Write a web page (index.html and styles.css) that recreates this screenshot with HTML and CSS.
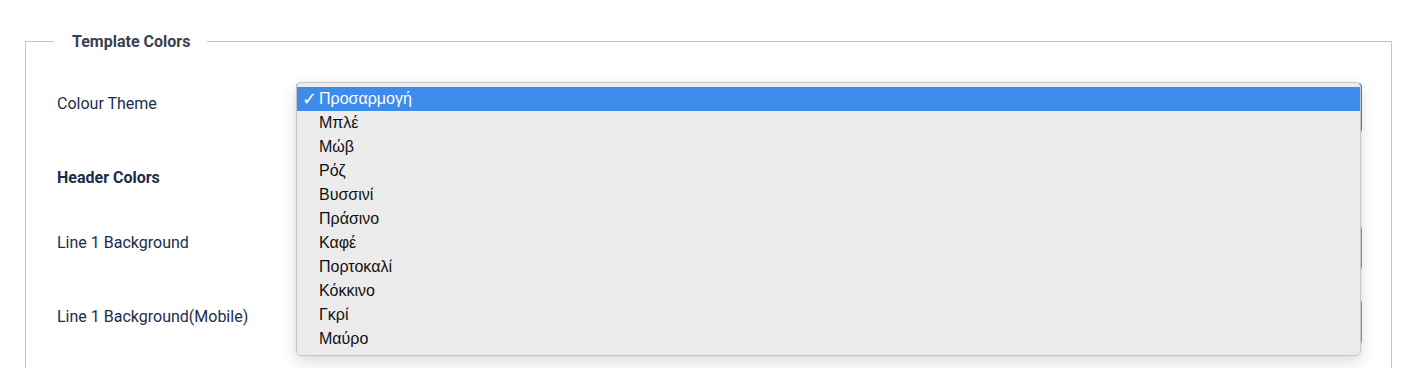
FILE: index.html
```html
<!DOCTYPE html>
<html lang="el">
<head>
<meta charset="utf-8">
<title>Template Colors</title>
<link rel="stylesheet" href="styles.css">
</head>
<body>
<div class="page">
  <fieldset class="panel">
    <legend class="panel-title">Template Colors</legend>

    <div class="row row-select">
      <label class="row-label">Colour Theme</label>
      <div class="row-control">
        <div class="select-box"></div>
        <ul class="menu">
          <li class="menu-item is-selected"><span class="check">✓</span>Προσαρμογή</li>
          <li class="menu-item">Μπλέ</li>
          <li class="menu-item">Μώβ</li>
          <li class="menu-item">Ρόζ</li>
          <li class="menu-item">Βυσσινί</li>
          <li class="menu-item">Πράσινο</li>
          <li class="menu-item">Καφέ</li>
          <li class="menu-item">Πορτοκαλί</li>
          <li class="menu-item">Κόκκινο</li>
          <li class="menu-item">Γκρί</li>
          <li class="menu-item">Μαύρο</li>
        </ul>
      </div>
    </div>

    <div class="row row-heading">
      <div class="row-label heading">Header Colors</div>
    </div>

    <div class="row row-input">
      <label class="row-label">Line 1 Background</label>
      <div class="row-control"><div class="input-box"></div></div>
    </div>

    <div class="row row-input row-last">
      <label class="row-label">Line 1 Background(Mobile)</label>
      <div class="row-control"><div class="input-box"></div></div>
    </div>
  </fieldset>
</div>
</body>
</html>
```

FILE: styles.css
```css
html, body {
  margin: 0;
  padding: 0;
  background: #ffffff;
}

body {
  font-family: Roboto, "Liberation Sans", Arial, sans-serif;
  color: #1b2d4b;
  overflow: hidden;
  height: 368px;
}

.page {
  padding: 32px 28px 0 25px;
}

.panel {
  margin: 0;
  border: 1px solid #b9c5d4;
  padding: 32px 30px 40px 31px;
  min-width: 0;
}

.panel-title {
  margin-left: -3px;
  padding: 0 17px 0 18px;
  font-size: 16px;
  line-height: 19px;
  font-weight: 700;
  color: #3a414c;
}

.row {
  display: grid;
  grid-template-columns: 239px 1fr;
  align-items: start;
}

.row-label {
  font-size: 16px;
  line-height: 20px;
  color: #1b2d4b;
}

.row-select {
  height: 50px;
}

.row-select .row-label {
  padding-top: 11px;
}

.row-heading {
  margin-top: 35px;
  height: 20px;
}

.heading {
  font-weight: 700;
}

.row-input {
  margin-top: 37px;
  height: 46px;
}

.row-input .row-label {
  padding-top: 8px;
}

.row-last {
  margin-top: 28px;
}

.row-control {
  position: relative;
  height: 100%;
}

.select-box,
.input-box {
  box-sizing: border-box;
  height: 100%;
  width: calc(100% + 1px);
  background: #ffffff;
  border-radius: 4px;
}

.select-box {
  border: 2px solid #3d8bea;
}

.input-box {
  border: 1px solid #8aa0c2;
}

.menu {
  position: absolute;
  top: -1px;
  left: 0;
  width: 100%;
  box-sizing: border-box;
  margin: 0;
  padding: 4px 0;
  list-style: none;
  background: linear-gradient(#ececec, #ebebeb);
  border: 1px solid #c6c6c6;
  border-radius: 5px;
  box-shadow: 0 6px 16px rgba(0, 0, 0, 0.14), 0 0 3px rgba(0, 0, 0, 0.06);
  z-index: 2;
}

.menu-item {
  position: relative;
  height: 24px;
  line-height: 24px;
  padding-left: 22px;
  font-family: "Liberation Sans", Arial, sans-serif;
  font-size: 16px;
  color: #111111;
}

.menu-item.is-selected {
  background: #3d8bea;
  color: #ffffff;
}

.check {
  position: absolute;
  left: 5px;
  top: 0;
  font-size: 18px;
}
```
